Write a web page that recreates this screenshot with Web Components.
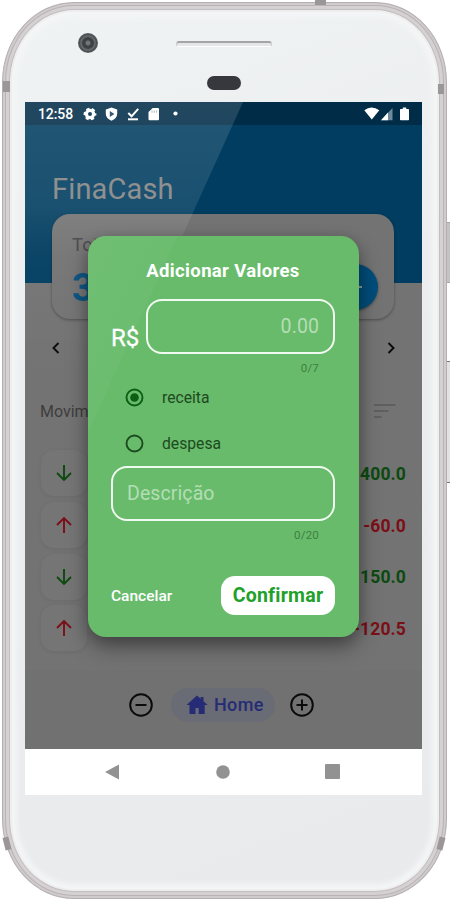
<!DOCTYPE html>
<html lang="pt-BR">
<head>
<meta charset="utf-8">
<title>FinaCash</title>
<style>
    body {
        margin: 0;
        background: #fff;
        font-family: Roboto, "Liberation Sans", sans-serif;
        overflow: hidden;
    }
</style>
</head>
<body>
<phone-frame>
    <status-bar slot="screen" time="12:58"></status-bar>
    <app-header slot="screen" name="FinaCash">
        <total-card label="Tot" value="3"></total-card>
    </app-header>
    <month-switch slot="screen"></month-switch>
    <movement-list slot="screen" label="Movim">
        <movement-row type="in">400.0</movement-row>
        <movement-row type="out">-60.0</movement-row>
        <movement-row type="in">150.0</movement-row>
        <movement-row type="out">-120.5</movement-row>
    </movement-list>
    <tab-bar slot="screen">Home</tab-bar>
    <system-nav slot="screen"></system-nav>
    <value-dialog slot="overlay">
        <span slot="title">Adicionar Valores</span>
        <outline-field slot="amount" align="right" counter="0/7">0.00</outline-field>
        <radio-option slot="options" checked>receita</radio-option>
        <radio-option slot="options">despesa</radio-option>
        <outline-field slot="description" counter="0/20">Descrição</outline-field>
        <span slot="cancel">Cancelar</span>
        <span slot="confirm">Confirmar</span>
    </value-dialog>
</phone-frame>

<script>
// small helper, every element here is template + shadow root
function define(name, html) {
    const template = document.createElement("template");
    template.innerHTML = html;
    customElements.define(name, class extends HTMLElement {
        constructor() {
            super();
            this.attachShadow({ mode: "open" });
            this.shadowRoot.appendChild(template.content.cloneNode(true));
        }

        connectedCallback() {
            this.shadowRoot.querySelectorAll("[data-attr]").forEach((el) => {
                el.textContent = this.getAttribute(el.dataset.attr) || "";
            });
        }
    });
}

define("phone-frame", `
<style>
    :host { display: block; position: relative; width: 450px; height: 900px; }
    .body {
        box-sizing: border-box;
        width: 445px;
        height: 897px;
        margin-left: 2px;
        position: absolute;
        top: 2px;
        border-radius: 72px / 80px;
        background: linear-gradient(160deg, #f0f3f4 0, #ebedee 40%, #e9eaec 100%);
        border: 1px solid #b4aeb0;
        box-shadow:
            inset 0 0 0 2px #d0cbcd,
            inset 0 0 0 3px #b9b3b5,
            inset 0 0 0 6px #d5d0d2,
            inset 0 0 0 7px #c3bec0,
            inset 0 0 0 9px #eeeeef,
            inset 0 0 5px 14px #f4f5f6;
        padding: 0 22px;
    }
    .bezel {
        height: 99px;
        display: grid;
        grid-template-columns: 74px 1fr 74px;
        grid-template-rows: 73px 26px;
        justify-items: center;
    }
    .camera {
        width: 20px;
        height: 20px;
        margin: 30px 0 0 51px;
        border-radius: 50%;
        background: radial-gradient(circle, #727678 0 12%, #3e4143 22% 38%, #6b6f71 48%, #4b4e50 60%, #626567 72%);
    }
    .speaker {
        width: 94px;
        height: 3px;
        margin-top: 38px;
        margin-right: 1px;
        border-radius: 3px;
        background: #e4e6e8;
        border: 1px solid #c9cbcd;
        border-top: 2px solid #a5a5a8;
        border-bottom-color: #fff;
    }
    .sensor {
        grid-column: 2;
        width: 34px;
        height: 14px;
        margin-right: 2px;
        border-radius: 7px;
        background: #37383d;
    }
    .screen {
        width: 397px;
        height: 693px;
        background: #737373;
        display: flex;
        flex-direction: column;
        position: relative;
        overflow: hidden;
    }
    .glare {
        position: absolute;
        left: 0;
        top: 0;
        width: 220px;
        height: 340px;
        background: linear-gradient(rgba(255,255,255,.13), rgba(255,255,255,.1) 30%, rgba(255,255,255,.04) 45%, rgba(255,255,255,0) 80%);
        clip-path: polygon(0 0, 218px 0, 64px 340px, 0 340px);
    }
    .mark { position: absolute; background: #9b9698; }
    .l { left: 3px; top: 81px; width: 7px; height: 11px; }
    .r { right: 6px; top: 84px; width: 6px; height: 10px; }
    .t { left: 315px; top: 0; width: 11px; height: 5px; }
    .bl { left: 4px; top: 837px; width: 6px; height: 13px; transform: rotate(-14deg); }
    .br { left: 438px; top: 837px; width: 6px; height: 13px; transform: rotate(14deg); }
    .key { position: absolute; left: 446px; width: 5px; box-sizing: border-box; background: #c6c1c3; border: 1px solid #aaa5a7; }
    .power { top: 222px; height: 61px; }
    .volume { top: 361px; height: 122px; background: #e4e1e2; border-top-color: #777; border-bottom-color: #777; }
</style>
<div class="key power"></div>
<div class="key volume"></div>
<div class="body">
    <div class="bezel">
        <div class="camera"></div>
        <div class="speaker"></div>
        <i></i>
        <div class="sensor"></div>
    </div>
    <div class="screen">
        <slot name="screen"></slot>
        <div class="glare"></div>
        <slot name="overlay"></slot>
    </div>
</div>
<div class="mark l"></div><div class="mark r"></div><div class="mark t"></div>
<div class="mark bl"></div><div class="mark br"></div>
`);

define("status-bar", `
<style>
    :host {
        display: flex;
        align-items: center;
        box-sizing: border-box;
        height: 23px;
        padding: 1px 13px 0;
        background: #012c48;
        color: #fff;
        flex: none;
    }
    span { font-size: 14px; font-weight: 500; letter-spacing: -.1px; width: 45px; }
    svg { display: block; }
    .gap { flex: 1; }
</style>
<span data-attr="time"></span>
<svg width="110" height="16" viewBox="0 0 110 16" fill="#fff">
    <circle cx="7" cy="8" r="3.6" fill="none" stroke="#fff" stroke-width="3.2"/>
    <circle cx="7" cy="8" r="5.3" fill="none" stroke="#fff" stroke-width="2.2" stroke-dasharray="3.2 2.35" stroke-dashoffset="1.6"/>
    <path d="M28.5 1.5l5.7 2v4.3c0 3.4-2.3 5.7-5.7 6.9c-3.4-1.2-5.7-3.5-5.7-6.9V3.5z"/>
    <path d="M26.8 5v6l4.6-3z" fill="#1c405a"/>
    <path d="M45.3 7l3.3 3.3L55.2 2.8" fill="none" stroke="#fff" stroke-width="2"/>
    <path d="M45 12.3h10v2H45z"/>
    <path d="M69.7 2H75q1 0 1 1v10.2q0 1-1 1h-8.500q-1 0-1-1V6z"/>
    <path d="M69 4.500v2.300M71.300 4.500v2.300M73.500 4.500v2.300" stroke="#9db0bd" stroke-width=".9"/>
    <circle cx="92.500" cy="7.500" r="2.100"/>
</svg>
<div class="gap"></div>
<svg width="46" height="16" viewBox="0 0 46 16" fill="#fff">
    <path d="M1.300 4.200Q8.500-1 16.300 4.200L8.800 13.500z"/>
    <path d="M29.500 2v12.200H18z" fill="#6d899b"/>
    <path d="M25 6.500v7.700H18z"/>
    <path d="M37.800 3h2V1.500h3.400V3h2q.8 0 .8.8v9.600q0 .8-.8.8h-7.400q-.8 0-.8-.8V3.800q0-.8.8-.8z"/>
</svg>
`);

define("app-header", `
<style>
    :host {
        display: block;
        box-sizing: border-box;
        height: 206px;
        padding: 46px 28px 0 27px;
        background: linear-gradient(#013d60 0 158px, #737373 158px);
        flex: none;
    }
    h1 {
        margin: 0 0 25px 0;
        font-weight: 400;
        font-size: 29px;
        line-height: 36px;
        letter-spacing: .15px;
        color: #838383;
        height: 36px;
    }
    ::slotted(*) { margin-top: -18px; }
</style>
<h1 data-attr="name"></h1>
<slot></slot>
`);

define("total-card", `
<style>
    :host {
        display: flex;
        justify-content: space-between;
        box-sizing: border-box;
        height: 105px;
        padding: 20px 16px 0 20px;
        border-radius: 18px;
        background: #737373;
        box-shadow: 0 1px 3px rgba(0,0,0,.35);
    }
    .label { font-size: 18.500px; line-height: 22px; color: #454545; }
    .value { font-size: 38px; line-height: 44px; font-weight: 700; color: #075482; margin-top: 10px; }
    .add {
        width: 46px;
        height: 46px;
        margin-top: 30px;
        border-radius: 50%;
        background: #014d7b;
        display: grid;
        place-items: center;
        box-shadow: 0 1px 3px rgba(0,0,0,.4);
    }
</style>
<div>
    <div class="label" data-attr="label"></div>
    <div class="value" data-attr="value"></div>
</div>
<div class="add">
    <svg width="18" height="18" viewBox="0 0 18 18" stroke="#8f9da6" stroke-width="2"><path d="M2 9h14M9 2v14"/></svg>
</div>
`);

define("month-switch", `
<style>
    :host {
        display: flex;
        justify-content: space-between;
        align-items: center;
        height: 34px;
        padding: 0 25px;
        flex: none;
    }
</style>
<svg width="12" height="14" viewBox="0 0 12 14" fill="none" stroke="#0b0b0b" stroke-width="1.900"><path d="M8.500 2l-5 5l5 5"/></svg>
<svg width="12" height="14" viewBox="0 0 12 14" fill="none" stroke="#0b0b0b" stroke-width="1.900"><path d="M3.500 2l5 5l-5 5"/></svg>
`);

define("movement-list", `
<style>
    :host { display: block; box-sizing: border-box; height: 305px; padding: 35px 16px 0 15px; flex: none; }
    header {
        display: flex;
        justify-content: space-between;
        align-items: center;
        height: 22px;
        margin-bottom: 27px;
        padding-right: 10px;
        font-size: 16px;
        color: #3e3e3e;
    }
    .rows { display: flex; flex-direction: column; gap: 6px; padding-top: 1px; }
</style>
<header>
    <span data-attr="label"></span>
    <svg width="22" height="16" viewBox="0 0 22 16" stroke="#5a5a5a" stroke-width="1.500"><path d="M0 2h21.500M0 8h14.500M0 14h7.500"/></svg>
</header>
<div class="rows"><slot></slot></div>
`);

define("movement-row", `
<style>
    :host {
        display: flex;
        justify-content: space-between;
        align-items: center;
        height: 45.800px;
        font-size: 17.500px;
        font-weight: 700;
        color: #0c4a10;
        letter-spacing: .15px;
    }
    :host([type="out"]) { color: #7b0f17; }
    .tile {
        width: 46px;
        height: 46px;
        margin-left: 1px;
        border-radius: 13px;
        background: #757575;
        box-shadow: 0 1px 4px rgba(0,0,0,.08);
        display: grid;
        place-items: center;
    }
    .value { padding-top: 2px; }
    :host([type="out"]) svg { transform: rotate(180deg); }
</style>
<div class="tile">
    <svg width="18" height="18" viewBox="0 0 18 18" fill="none" stroke="currentColor" stroke-width="1.900"><path d="M9 1v15M2 9l7 7l7-7"/></svg>
</div>
<div class="value"><slot></slot></div>
`);

define("tab-bar", `
<style>
    :host {
        display: flex;
        justify-content: center;
        align-items: center;
        height: 65px;
        padding: 2px 0 12px;
        background: #717171;
        flex: none;
    }
    .pill {
        display: flex;
        align-items: center;
        gap: 6px;
        box-sizing: border-box;
        width: 104px;
        height: 34px;
        margin: 0 14px 0 17px;
        padding-left: 15px;
        border-radius: 17px;
        background: #696b75;
        color: #252b74;
        font-size: 18px;
        font-weight: 500;
        letter-spacing: .35px;
    }
    svg { flex: none; }
    .last { margin-right: 4px; }
</style>
<svg width="26" height="26" viewBox="0 0 26 26" fill="none" stroke="#0b0b0b" stroke-width="2"><circle cx="13" cy="13" r="10.800"/><path d="M7.500 13h11"/></svg>
<div class="pill">
    <svg width="22" height="20" viewBox="0 0 22 20" fill="#252b74"><path d="M11 .5L.5 10h3v9h6v-6h3.200v6h6v-9h3L17.500 6.200V2h-2.800v1.800z"/></svg>
    <slot></slot>
</div>
<svg class="last" width="26" height="26" viewBox="0 0 26 26" fill="none" stroke="#0b0b0b" stroke-width="2"><circle cx="13" cy="13" r="10.800"/><path d="M7.500 13h11M13 7.500v11"/></svg>
`);

define("system-nav", `
<style>
    :host {
        display: flex;
        justify-content: space-between;
        align-items: center;
        box-sizing: border-box;
        height: 46px;
        margin-top: auto;
        padding: 0 82px 1px 80px;
        background: #fff;
        flex: none;
    }
</style>
<svg width="15" height="16" fill="#929292"><path d="M0 8L14 .5v15z"/></svg>
<svg width="14" height="14" fill="#929292"><circle cx="7" cy="7" r="6.800"/></svg>
<svg width="15" height="15" fill="#929292"><rect width="15" height="15" rx="1"/></svg>
`);

define("value-dialog", `
<style>
    :host {
        position: absolute;
        left: 63px;
        top: 134px;
        box-sizing: border-box;
        width: 271px;
        height: 401px;
        padding: 24px 24px 0 23px;
        border-radius: 18px;
        background: linear-gradient(114.500deg, rgba(255,255,255,.05) 0, rgba(255,255,255,.03) 81px, transparent 82px), #68bb6b;
        box-shadow: 0 11px 22px -1px rgba(0,0,0,.36), 0 3px 14px rgba(0,0,0,.18);
        color: #fff;
    }
    .title { text-align: center; font-size: 18.500px; line-height: 22px; font-weight: 700; letter-spacing: .35px; height: 39px; }
    .amount { display: flex; height: 76px; }
    .amount b { font-weight: 400; font-size: 24px; width: 35px; line-height: 28px; margin-top: 25px; flex: none; -webkit-text-stroke: .3px #fff; }
    .amount ::slotted(*) { flex: 1; }
    .options { display: flex; flex-direction: column; height: 91px; }
    .description { height: 76px; }
    .actions { display: flex; justify-content: space-between; align-items: center; margin-top: 33px; height: 40px; }
    .cancel { font-size: 15.500px; font-weight: 500; padding-top: 1px; }
    .confirm {
        width: 114px;
        height: 39px;
        line-height: 39px;
        border-radius: 14px;
        background: #fff;
        color: #21a02a;
        text-align: center;
        font-size: 19.500px;
        font-weight: 700;
        letter-spacing: .25px;
    }
</style>
<div class="title"><slot name="title"></slot></div>
<div class="amount"><b>R$</b><slot name="amount"></slot></div>
<div class="options"><slot name="options"></slot></div>
<div class="description"><slot name="description"></slot></div>
<div class="actions">
    <div class="cancel"><slot name="cancel"></slot></div>
    <div class="confirm"><slot name="confirm"></slot></div>
</div>
`);

define("outline-field", `
<style>
    :host { display: block; }
    .box {
        box-sizing: border-box;
        height: 55px;
        border: 2px solid #f1faf1;
        border-radius: 16px;
        padding: 0 14px;
        line-height: 51px;
        font-size: 19.500px;
        letter-spacing: .1px;
        color: #b4deb5;
    }
    :host([align="right"]) .box { text-align: right; }
    .counter { text-align: right; padding-right: 16px; margin-top: 7px; font-size: 11.500px; line-height: 14px; color: #3e8040; letter-spacing: .2px; }
</style>
<div class="box"><slot></slot></div>
<div class="counter" data-attr="counter"></div>
`);

define("radio-option", `
<style>
    :host { display: flex; align-items: center; gap: 18px; height: 45.500px; padding-left: 14px; font-size: 15.700px; color: #1d4a20; }
    circle { fill: none; stroke: #1c4a1e; stroke-width: 1.900; }
    .dot { display: none; }
    :host([checked]) circle { stroke: #0b5e13; }
    :host([checked]) .dot { display: block; fill: #0b5e13; stroke: none; }
</style>
<svg width="19" height="19" viewBox="0 0 19 19"><circle cx="9.500" cy="9.500" r="8"/><circle class="dot" cx="9.500" cy="9.500" r="4.300"/></svg>
<slot></slot>
`);
</script>
</body>
</html>
